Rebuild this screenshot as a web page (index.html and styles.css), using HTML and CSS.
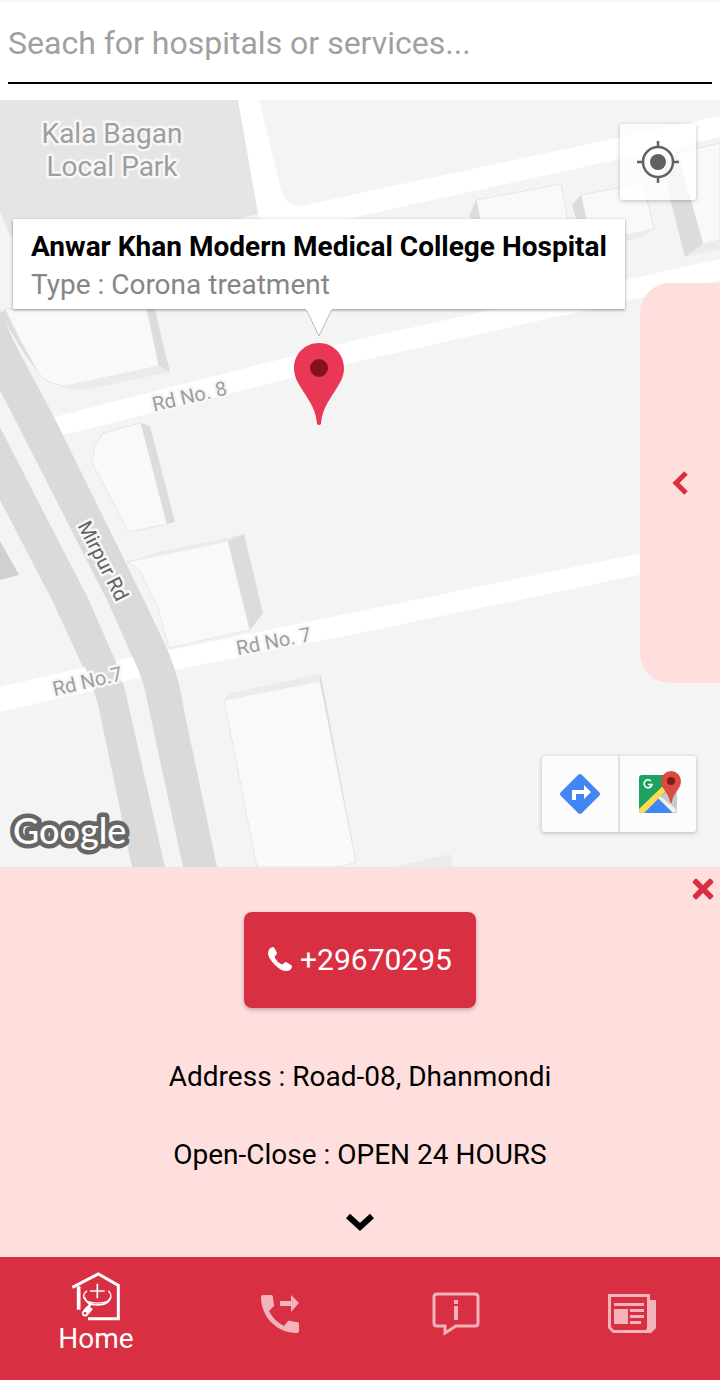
FILE: index.html
```html
<!DOCTYPE html>
<html lang="en">
<head>
<meta charset="utf-8">
<meta name="viewport" content="width=device-width, initial-scale=1">
<title>Hospital finder</title>
<link rel="stylesheet" href="styles.css">
</head>
<body>
<header class="search">
  <input class="search-input" type="search" aria-label="Search" placeholder="Seach for hospitals or services...">
</header>
<main class="map">
  <svg class="map-canvas" viewBox="0 100 720 767" preserveAspectRatio="xMinYMin slice" role="img" aria-label="Map of Dhanmondi">
    <rect class="land" y="100" width="720" height="767"/>
    <path class="park" d="M0 100H238L260 214L150 236H10L0 212Z"/>
    <path class="road" d="M238 100H259L281 190Q285 206 303 206L360 193L720 116V137L360 216L270 236L258 214Z"/>
    <path class="road" d="M54 417L360 339L720 259V280L360 361L63 435Z"/>
    <path class="avenue" d="M0 427L89 600L115 660Q122 678 125 690L165 867H132L98 704Q93 687 83 667L52 600L0 500Z"/>
    <path class="land" d="M0 390L107 600L132 656L116 660L89 600L0 427Z"/>
    <path class="road" d="M0 687L85 667L95 690L0 712Z"/>
    <path class="road" d="M116 661L137 656L142 677L121 682Z"/>
    <path class="road" d="M167 651L360 611L720 537V558L360 633L174 670Z"/>
    <path class="avenue" d="M0 310L13 340L54 417L144 600L168 651Q180 680 184 710L217 867H183L147 700Q144 680 132 656L107 600L0 390Z"/>
    <path class="shade-deep" d="M0 541L19 575L0 580Z"/>

    <path class="shade" d="M0 314L5 309L20 340L38 372Q25 356 13 335Z"/>
    <path class="roof" d="M5 309L20 340L38 372Q46 385 67 386L159 366L147 309Z"/>
    <path class="shade" d="M147 309H155L162 340L170 372L159 366Z"/>
    <path class="shade-light" d="M58 386L67 386L159 366L170 372L80 391Z"/>

    <path class="roof" d="M141 423L103 433L95 445L92 463L129 532L167 524Z"/>
    <path class="shade" d="M141 423L150 426L175 522L167 524Z"/>

    <path class="roof" d="M127 562Q142 568 145 582L158 608L169 648L250 630L228 541Z"/>
    <path class="shade-light" d="M127 562L163 551L244 534L228 541Z"/>
    <path class="shade" d="M228 541L244 534L263 613L250 630Z"/>

    <path class="roof" d="M224 700L320 681L356 862L340 867H257Z"/>
    <path class="shade-light" d="M224 700L230 693L320 674V681Z"/>
    <path class="shade" d="M320 674L322 681L356 862L320 681Z"/>
    <path class="shade-light" d="M394 867L450 854L454 867Z"/>

    <path class="roof" d="M476 200L561 184L568 222H481Z"/>
    <path class="shade" d="M476 200L469 217L481 222Z"/>
    <path class="roof" d="M581 195L643 183L654 229L627 235L586 222Z"/>
    <path class="shade" d="M581 195L572 205L577 222H587Z"/>
    <path class="shade-light" d="M654 229L642 237L626 241V235Z"/>
    <path class="roof" d="M677 153L720 143V240L703 244Z"/>
    <path class="shade" d="M677 153L662 167L685 257L703 244Z"/>
    <path class="shade-light" d="M703 244L720 240V249L685 257Z"/>

    <text class="label label-park" x="112" y="143">Kala Bagan</text>
    <text class="label label-park" x="112" y="176">Local Park</text>
    <text class="label" transform="translate(191 403) rotate(-13)">Rd No. 8</text>
    <text class="label" transform="translate(275 648) rotate(-11)">Rd No. 7</text>
    <text class="label" transform="translate(89 688) rotate(-13)">Rd No.7</text>
    <text class="label label-avenue" transform="translate(97 564) rotate(63)">Mirpur Rd</text>

    <path fill="#ea3755" d="M319 343C305 343 294 354 294 368C294 377 298 383 303 391C311 403 316 411 317 424Q319 426 321 424C322 411 327 403 335 391C340 383 344 377 344 368C344 354 333 343 319 343Z"/>
    <circle cx="319" cy="368" r="9" fill="#85101f"/>
    <text class="brand" x="13" y="844">Google</text>
  </svg>

  <article class="callout">
    <h1 class="callout-title">Anwar Khan Modern Medical College Hospital</h1>
    <p class="callout-type">Type : Corona treatment</p>
    <svg class="callout-tail" viewBox="0 0 28 30" aria-hidden="true"><path d="M1 0L14 27L27 0" fill="#fff" stroke="#bbb"/><path d="M1 -2H27V1H1Z" fill="#fff"/></svg>
  </article>

  <button class="map-button locate" type="button" aria-label="My location">
    <svg width="42" height="42" viewBox="0 0 42 42" fill="none" stroke="#616161" stroke-width="2.500"><circle cx="21" cy="21" r="15"/><circle cx="21" cy="21" r="8" fill="#616161" stroke="none"/><path d="M21 0V6M21 36V42M0 21H6M36 21H42"/></svg>
  </button>

  <button class="drawer" type="button" aria-label="Open list">
    <svg width="18" height="26" viewBox="0 0 18 26" fill="none" stroke="#d92f42" stroke-width="5"><path d="M15 3L5 13L15 23"/></svg>
  </button>

  <div class="map-tools">
    <button class="map-button" type="button" aria-label="Directions">
      <svg width="40" height="40" viewBox="0 0 40 40"><path d="M18 1Q20 -1 22 1L39 18Q41 20 39 22L22 39Q20 41 18 39L1 22Q-1 20 1 18Z" fill="#4285f4"/><path d="M12 26V16H24V11L31 18L24 25V20H16V26Z" fill="#fff"/></svg>
    </button>
    <button class="map-button" type="button" aria-label="Open in maps">
      <svg width="46" height="46" viewBox="-4 0 46 46">
        <rect y="4" width="38" height="38" rx="3" fill="#1fa25f"/>
        <path d="M20 27L38 10V39L36 41Z" fill="#c9c9c9"/>
        <path d="M4 42L19 27L34 42Z" fill="#4285f4"/>
        <path d="M18 28L21 25L38 39Q37 42 34 42L19 27Z" fill="#f1f1f1"/>
        <path d="M0 38L26 13L28 19L5 42H3Q0 42 0 39Z" fill="#fddc4f"/>
        <path d="M12 10A4 4 0 1 0 13 13.500H9" fill="none" stroke="#fff" stroke-width="1.600"/>
        <path d="M32 0A10 10 0 0 0 22 10C22 18 30 22 31 31Q32 33 33 31C34 22 42 18 42 10A10 10 0 0 0 32 0Z" fill="#db4b3f"/>
        <circle cx="32" cy="10" r="4" fill="#7d1c17"/>
      </svg>
    </button>
  </div>
</main>

<section class="details">
  <button class="close" type="button" aria-label="Close">
    <svg width="22" height="22" viewBox="0 0 22 22"><path d="M5 1L11 7L17 1Q18 0 19 1L21 3Q22 4 21 5L15 11L21 17Q22 18 21 19L19 21Q18 22 17 21L11 15L5 21Q4 22 3 21L1 19Q0 18 1 17L7 11L1 5Q0 4 1 3L3 1Q4 0 5 1Z" fill="#d92f42"/></svg>
  </button>
  <a class="call" href="tel:+29670295">
    <svg width="24" height="24" viewBox="0 0 24 24" fill="#fff" aria-hidden="true"><path d="M5 0Q6 0 7 2L9 6Q9 7 8 8Q6 9 7 11Q9 15 13 17Q15 18 16 16Q17 15 18 15L23 18Q24 19 24 20Q23 24 18 24Q13 24 7 18Q1 12 0 7Q0 1 5 0Z"/></svg>
    <span>+29670295</span>
  </a>
  <p class="detail">Address : Road-08, Dhanmondi</p>
  <p class="detail">Open-Close : OPEN 24 HOURS</p>
  <button class="more" type="button" aria-label="Show more">
    <svg width="30" height="20" viewBox="0 0 30 20" fill="none" stroke="#000" stroke-width="6"><path d="M3 3L15 14L27 3"/></svg>
  </button>
</section>

<nav class="tabs" aria-label="Main">
  <a class="tab tab-active" href="#home">
    <svg width="50" height="50" viewBox="15 15 150 150" fill="none" stroke="#fff" aria-hidden="true">
      <path d="M19 61L97 21L157 55V155H66" stroke-width="9"/>
      <path d="M38 58V128" stroke-width="11"/>
      <path d="M94 50V94M72 72H116" stroke-width="5"/>
      <path d="M63 71C49 82 50 96 64 103C82 110 108 110 124 103C138 95 139 83 127 71" stroke-width="4"/>
      <path d="M57 92C58 106 68 113 94 114C120 113 131 106 132 92" stroke-width="5"/>
      <path d="M74 110L66 122" stroke-width="8"/>
      <path d="M62 118L76 122Q82 124 78 130L64 146Q56 152 49 145Q45 138 50 132Z" fill="#fff" stroke="none"/>
      <circle cx="57" cy="139" r="4" fill="#d92f42" stroke="none"/>
    </svg>
    <span>Home</span>
  </a>
  <a class="tab" href="#calls" aria-label="Calls">
    <svg width="40" height="40" viewBox="0 0 40 40" fill="#f2b3ba"><path d="M3 1H11Q13 1 13 3Q13 7 14 10Q15 12 13 13L9 17Q14 27 24 32L28 27Q29 26 31 27Q34 28 37 28Q39 28 39 30V37Q39 39 37 39C17 39 1 23 1 3Q1 1 3 1ZM20 7H31V1L39 9L31 18V12H20Z"/></svg>
  </a>
  <a class="tab" href="#info" aria-label="Information">
    <svg width="48" height="44" viewBox="0 0 48 44" fill="none" stroke="#f2b3ba" stroke-width="3"><path d="M5 2H43Q46 2 46 5V31Q46 34 43 34H24L13 41V34H5Q2 34 2 31V5Q2 2 5 2Z"/><path d="M24 8V12M24 14V28" stroke-width="4"/></svg>
  </a>
  <a class="tab" href="#news" aria-label="News">
    <svg width="48" height="40" viewBox="0 0 48 40" fill="#f2b3ba"><path fill-rule="evenodd" d="M0 0H42V6H48V34L43 39H5L0 34ZM3 3V33L6 36H38L39 34V3Z"/><path d="M6 9H36V12H6ZM6 15H20V30H6ZM22 15H36V18H22ZM22 21H36V24H22ZM22 27H33V30H22Z"/></svg>
  </a>
</nav>
</body>
</html>
```
FILE: styles.css
```css
* { box-sizing: border-box; }

body {
  margin: 0;
  min-height: 100vh;
  display: flex;
  flex-direction: column;
  background: #fff;
  color: #000;
  font-family: Roboto, "Liberation Sans", sans-serif;
}

h1, p { margin: 0; }

button {
  border: 0;
  padding: 0;
  background: none;
  cursor: pointer;
}

a { color: inherit; text-decoration: none; }
svg { display: block; }

.search {
  padding: 0 8px 16px;
  border-top: 2px solid #fdf5f5;
}

.search-input {
  display: block;
  width: 100%;
  height: 82px;
  padding: 2px 0 0;
  border: 0;
  border-bottom: 2px solid #000;
  border-radius: 0;
  outline: 0;
  background: transparent;
  font: 400 32px Roboto, "Liberation Sans", sans-serif;
  appearance: none;
}

.search-input::placeholder { color: #a0a0a0; opacity: 1; }

.map {
  position: relative;
  flex: 1 0 640px;
  overflow: hidden;
  background: #f4f4f4;
}

.map-canvas {
  position: absolute;
  inset: 0;
  width: 100%;
  height: 100%;
}

.land { fill: #f4f4f4; }
.park { fill: #e5e5e5; }
.road { fill: #fff; }
.avenue { fill: #dadada; }
.roof { fill: #f9f9f9; stroke: #e6e6e6; }
.shade { fill: #dcdcdc; }
.shade-light { fill: #ebebeb; }
.shade-deep { fill: #d0d0d0; }

.label {
  fill: #9e9e9e;
  stroke: #f7f7f7;
  stroke-width: 5px;
  stroke-linejoin: round;
  paint-order: stroke;
  text-anchor: middle;
  font-size: 20px;
}

.label-park { font-size: 28px; }
.label-avenue { fill: #616161; }

.brand {
  fill: #fff;
  stroke: #666;
  stroke-width: 9px;
  stroke-linejoin: round;
  paint-order: stroke;
  font: 500 36px Lato, sans-serif;
}

.callout {
  position: absolute;
  top: 119px;
  left: 13px;
  padding: 9px 18px 5px;
  background: #fff;
  box-shadow: 0 1px 3px rgba(0, 0, 0, 0.4);
}

.callout-title {
  font-size: 28px;
  line-height: 38px;
  font-weight: 700;
  white-space: nowrap;
}

.callout-type {
  color: #868686;
  font-size: 28px;
  line-height: 38px;
}

.callout-tail {
  position: absolute;
  top: 100%;
  left: 50%;
  width: 28px;
  height: 30px;
  margin-left: -14px;
}

.map-button {
  display: grid;
  place-items: center;
  width: 76px;
  height: 76px;
}

.locate {
  position: absolute;
  top: 24px;
  right: 24px;
  border-radius: 3px;
  background: rgba(255, 255, 255, 0.75);
  box-shadow: 0 1px 4px rgba(0, 0, 0, 0.25);
}

.drawer {
  position: absolute;
  top: 183px;
  right: 0;
  width: 80px;
  height: 400px;
  display: grid;
  place-items: center;
  border-radius: 30px 0 0 30px;
  background: #ffdfde;
}

.map-tools {
  position: absolute;
  right: 24px;
  bottom: 35px;
  display: flex;
  gap: 2px;
  border-radius: 3px;
  background: linear-gradient(#e0e0e0, #e0e0e0) center / 2px 100% no-repeat, #fcfcfc;
  box-shadow: 0 1px 4px rgba(0, 0, 0, 0.25);
}

.details {
  position: relative;
  display: flex;
  flex-direction: column;
  align-items: center;
  padding: 45px 16px 24px;
  background: #ffdfde;
}

.close {
  position: absolute;
  top: 11px;
  right: 6px;
}

.call {
  display: flex;
  align-items: center;
  gap: 8px;
  height: 96px;
  margin-bottom: 49px;
  padding: 0 24px 2px;
  border-radius: 8px;
  background: #d92f42;
  box-shadow: 0 2px 4px rgba(0, 0, 0, 0.25);
  color: #fff;
  font-size: 30px;
}

.detail {
  margin-bottom: 38px;
  font-size: 28px;
  line-height: 40px;
  text-align: center;
}

.more {
  padding: 0 8px;
}

.tabs {
  display: grid;
  grid-template-columns: 12fr 11fr 11fr 11fr;
  min-height: 123px;
  padding-bottom: 10px;
  background: #d92f42;
}

.tab {
  display: flex;
  flex-direction: column;
  align-items: center;
  justify-content: center;
}

.tab-active {
  color: #fff;
  font-size: 28px;
  line-height: 34px;
}
```
